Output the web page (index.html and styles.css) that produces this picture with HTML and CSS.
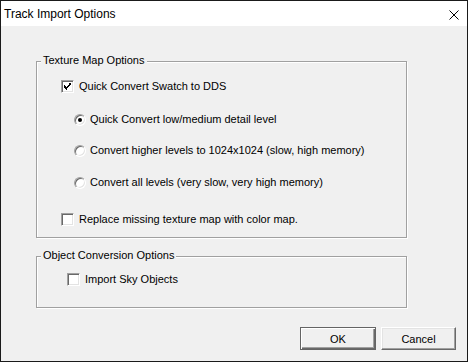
FILE: index.html
```html
<!DOCTYPE html>
<html>
<head>
<meta charset="utf-8">
<link rel="stylesheet" href="styles.css">
</head>
<body>
<div class="window">
  <div class="titlebar">
    <span class="title">Track Import Options</span>
    <svg class="close" width="10" height="10" viewBox="0 0 10 10"><path d="M0.5 0.5 L9.5 9.5 M9.5 0.5 L0.5 9.5" stroke="#000" stroke-width="1" fill="none"/></svg>
  </div>
  <div class="client">
    <div class="group g1">
      <span class="legend">Texture Map Options</span>
      <div class="row chk-row r1">
        <span class="checkbox"><svg width="7" height="7" viewBox="0 0 7 7"><path d="M0 2h1v1h-1zM0 3h2v1h-2zM0 4h3v1h-3zM1 5h2v1h-2zM2 6h1v1h-1zM3 4h1v1h-1zM3 3h2v1h-2zM4 2h2v1h-2zM5 1h1v1h-1zM5 0h2v1h-2zM6 1h1v1h-1z" fill="#000"/></svg></span>
        <span class="label">Quick Convert Swatch to DDS</span>
      </div>
      <div class="row radio-row ra1">
        <span class="radio on"></span>
        <span class="label">Quick Convert low/medium detail level</span>
      </div>
      <div class="row radio-row ra2">
        <span class="radio"></span>
        <span class="label">Convert higher levels to 1024x1024 (slow, high memory)</span>
      </div>
      <div class="row radio-row ra3">
        <span class="radio"></span>
        <span class="label">Convert all levels (very slow, very high memory)</span>
      </div>
      <div class="row chk-row r5">
        <span class="checkbox"></span>
        <span class="label">Replace missing texture map with color map.</span>
      </div>
    </div>
    <div class="group g2">
      <span class="legend">Object Conversion Options</span>
      <div class="row chk-row r6">
        <span class="checkbox"></span>
        <span class="label">Import Sky Objects</span>
      </div>
    </div>
    <div class="buttons">
      <button class="btn default">OK</button>
      <button class="btn">Cancel</button>
    </div>
  </div>
</div>
</body>
</html>
```
FILE: styles.css
```css
html, body {
  margin: 0;
  padding: 0;
  background: #ffffff;
}
body {
  width: 469px;
  height: 362px;
  overflow: hidden;
}
.window {
  box-sizing: border-box;
  width: 468px;
  height: 362px;
  border: 1px solid #1a1a1a;
  background: #f0f0f0;
  display: flex;
  flex-direction: column;
  font-family: "Liberation Sans", Arial, sans-serif;
  font-size: 11px;
  color: #000;
}
.titlebar {
  height: 25px;
  background: #ffffff;
  display: flex;
  align-items: center;
  justify-content: space-between;
  padding: 0 8px 0 3px;
}
.title {
  font-size: 12px;
  line-height: 14px;
}
.close {
  display: block;
  margin-top: 2px;
}
.client {
  flex: 1;
  display: flex;
  flex-direction: column;
  padding-left: 35px;
}
.group {
  position: relative;
  box-sizing: border-box;
  width: 371px;
  border: 1px solid #a0a0a0;
  box-shadow: inset 1px 1px #ffffff, 1px 1px #ffffff;
  display: flex;
  flex-direction: column;
}
.g1 {
  margin-top: 35px;
  height: 177px;
}
.g2 {
  margin-top: 18px;
  height: 52px;
}
.legend {
  position: absolute;
  top: -8px;
  left: 4px;
  padding: 0 2px;
  background: #f0f0f0;
  line-height: 13px;
}
.row {
  display: flex;
  align-items: center;
  height: 13px;
  line-height: 13px;
}
.chk-row { padding-left: 24px; }
.radio-row { padding-left: 37px; }
.r1 { margin-top: 18px; }
.ra1 { margin-top: 20px; }
.ra2 { margin-top: 18px; }
.ra3 { margin-top: 19px; }
.r5 { margin-top: 24px; }
.r6 { margin-top: 16px; padding-left: 30px; }
.checkbox {
  box-sizing: border-box;
  width: 13px;
  height: 13px;
  flex: none;
  background: #ffffff;
  border-style: solid;
  border-width: 1px;
  border-color: #a0a0a0 #ffffff #ffffff #a0a0a0;
  box-shadow: inset 1px 1px #696969, inset -1px -1px #e3e3e3;
  display: flex;
  align-items: center;
  justify-content: center;
  margin-right: 5px;
}
.checkbox svg {
  display: block;
}
.radio {
  box-sizing: border-box;
  width: 12px;
  height: 12px;
  flex: none;
  border-radius: 50%;
  background: #ffffff;
  border: 1px solid;
  border-color: #a0a0a0 #ffffff #ffffff #a0a0a0;
  box-shadow: inset 1px 1px #696969, inset -1px -1px #e3e3e3;
  margin-right: 4px;
  display: flex;
  align-items: center;
  justify-content: center;
}
.radio.on::after {
  content: "";
  width: 4px;
  height: 4px;
  border-radius: 50%;
  background: #000;
}
.label {
  white-space: nowrap;
}
.buttons {
  display: flex;
  justify-content: flex-end;
  gap: 5px;
  margin-top: 19px;
  padding-right: 11px;
}
.btn {
  box-sizing: border-box;
  height: 23px;
  width: 75px;
  margin: 0;
  padding: 0;
  font-family: "Liberation Sans", Arial, sans-serif;
  font-size: 11px;
  color: #000;
  background: #f0f0f0;
  border: 1px solid;
  border-color: #ffffff #696969 #696969 #ffffff;
  box-shadow: inset -1px -1px #a0a0a0, inset 1px 1px #e3e3e3;
  border-radius: 0;
}
.btn.default {
  width: 76px;
  border-color: #646464;
  box-shadow: inset 1px 1px #ffffff, inset -1px -1px #696969, inset -2px -2px #a0a0a0;
}
```
